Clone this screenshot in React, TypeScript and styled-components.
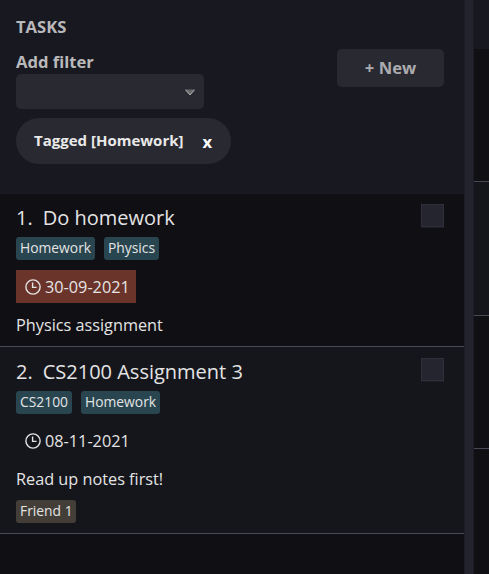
import React from "react";
import styled, { createGlobalStyle } from "styled-components";

const Global = createGlobalStyle`
  * { box-sizing: border-box; }
  body { margin: 0; background: #100f14; font-family: "Open Sans", "Noto Sans", sans-serif; color: #e4e4e4; }
`;

const Window = styled.div`
  display: grid;
  grid-template-columns: 464px 10px 1fr;
  height: 574px;
  overflow: hidden;
  background: #100f14;
`;

const Panel = styled.section`
  display: flex;
  flex-direction: column;
`;

const Header = styled.header`
  display: flex;
  justify-content: space-between;
  align-items: flex-start;
  height: 194px;
  padding: 16px 20px 0 16px;
  background: #181820;
`;

const Filters = styled.div`
  display: flex;
  flex-direction: column;
  align-items: flex-start;
`;

const Heading = styled.h1`
  margin: 0;
  font-size: 16.6px;
  line-height: 22px;
  font-weight: 700;
  color: #b9b9bb;
`;

const Label = styled.label`
  margin-top: 13px;
  font-size: 16.6px;
  line-height: 22px;
  font-weight: 700;
  color: #b9b9bb;
`;

const Select = styled.div`
  display: flex;
  align-items: center;
  justify-content: flex-end;
  width: 188px;
  height: 35px;
  margin-top: 1px;
  padding: 1px 9px 0 0;
  border-radius: 5px;
  background: #292932;
`;

const Chip = styled.div`
  display: flex;
  align-items: center;
  width: 215px;
  height: 46px;
  margin-top: 9px;
  padding: 0 19px 2px 18px;
  border-radius: 23px;
  background: #292932;
  font-size: 15px;
  font-weight: 700;
  line-height: 20px;
  color: #e9e9e9;
`;

const Remove = styled.span`
  margin: 4px 0 0 auto;
  font-size: 16.6px;
  color: #ffffff;
`;

const NewButton = styled.button`
  width: 107px;
  height: 38px;
  margin-top: 33px;
  padding: 0;
  border: 0;
  border-radius: 5px;
  background: #292932;
  color: #acacaf;
  font: 700 16.6px/38px "Open Sans", "Noto Sans", sans-serif;
`;

const Card = styled.article<{ $alt?: boolean; $height: number }>`
  display: flex;
  justify-content: space-between;
  height: ${(p) => p.$height}px;
  padding: ${(p) => (p.$alt ? 11 : 10)}px 20px 0 16px;
  border-bottom: 1px solid #494955;
  background: ${(p) => (p.$alt ? "#15161b" : "#100f14")};
`;

const Details = styled.div`
  display: flex;
  flex-direction: column;
  align-items: flex-start;
`;

const Title = styled.h2`
  display: flex;
  gap: 10px;
  margin: 0;
  font-size: 20px;
  font-weight: 400;
  line-height: 28px;
  white-space: nowrap;
`;

const Tags = styled.div`
  display: flex;
  gap: 9px;
  margin-top: 5px;
`;

const Tag = styled.span<{ $person?: boolean; $width: number }>`
  width: ${(p) => p.$width}px;
  height: 23px;
  padding-left: 4px;
  border-radius: 3px;
  background: ${(p) => (p.$person ? "#433f38" : "#294650")};
  font-size: 13.85px;
  line-height: 22px;
  white-space: nowrap;
`;

const Due = styled.div<{ $overdue?: boolean }>`
  display: flex;
  align-items: center;
  gap: 4px;
  width: 120px;
  height: 33px;
  margin-top: 10px;
  padding: 1px 0 0 9px;
  background: ${(p) => (p.$overdue ? "#6b342a" : "transparent")};
  font-size: 16.25px;
  line-height: 22px;
`;

const Note = styled.p`
  margin: 11px 0 0;
  font-size: 16.25px;
  line-height: 22px;
  white-space: nowrap;
`;

const People = styled(Tags)`
  margin-top: 10px;
`;

const Check = styled.div`
  width: 23px;
  height: 23px;
  border: 1px solid #30303a;
  background: #25252f;
  box-shadow: 0 1px 0 #1d1d25;
`;

const Divider = styled.div`
  border: solid #1c1c25;
  border-width: 0 1px;
  background: #23232d;
`;

const SideHeader = styled.div`
  height: 49px;
  background: #181820;
`;

const SideRow = styled.div<{ $alt?: boolean; $height: number }>`
  height: ${(p) => p.$height}px;
  border-bottom: 1px solid #494955;
  background: ${(p) => (p.$alt ? "#15161b" : "#100f14")};
`;

const Clock = () => (
  <svg width="16" height="16" viewBox="0 0 16 16" fill="none" stroke="#e4e4e4" strokeWidth="1.4">
    <circle cx="8" cy="8" r="7.1" />
    <path d="M7.6 3.5V8.4H11.6" />
  </svg>
);

const Arrow = () => (
  <svg width="10" height="7" viewBox="0 0 10 7">
    <path d="M0 0.5H10L5 6.2Z" fill="#68686b" />
    <path d="M0.5 0.8L5 5.9L9.5 0.8" fill="none" stroke="#b4b4b6" />
  </svg>
);

type TagInfo = { name: string; width: number };
type Task = { title: string; tags: TagInfo[]; due: string; overdue?: boolean; note: string; people?: TagInfo[]; height: number };

const tasks: Task[] = [
  {
    title: "Do homework",
    tags: [{ name: "Homework", width: 79 }, { name: "Physics", width: 55 }],
    due: "30-09-2021",
    overdue: true,
    note: "Physics assignment",
    height: 153,
  },
  {
    title: "CS2100 Assignment 3",
    tags: [{ name: "CS2100", width: 56 }, { name: "Homework", width: 79 }],
    due: "08-11-2021",
    note: "Read up notes first!",
    people: [{ name: "Friend 1", width: 60 }],
    height: 187,
  },
];

export default function App() {
  return (
    <>
      <Global />
      <Window>
        <Panel>
          <Header>
            <Filters>
              <Heading>TASKS</Heading>
              <Label>Add filter</Label>
              <Select><Arrow /></Select>
              <Chip>Tagged [Homework]<Remove>x</Remove></Chip>
            </Filters>
            <NewButton>+ New</NewButton>
          </Header>
          {tasks.map((task, i) => (
            <Card key={task.title} $alt={i % 2 === 1} $height={task.height}>
              <Details>
                <Title><span>{i + 1}.</span><span>{task.title}</span></Title>
                <Tags>{task.tags.map((t) => <Tag key={t.name} $width={t.width}>{t.name}</Tag>)}</Tags>
                <Due $overdue={task.overdue}><Clock />{task.due}</Due>
                <Note>{task.note}</Note>
                {task.people && (
                  <People>{task.people.map((p) => <Tag key={p.name} $person $width={p.width}>{p.name}</Tag>)}</People>
                )}
              </Details>
              <Check />
            </Card>
          ))}
        </Panel>
        <Divider />
        <Panel>
          <SideHeader />
          <SideRow $height={133} />
          <SideRow $alt $height={134} />
          <SideRow $height={133} />
        </Panel>
      </Window>
    </>
  );
}
